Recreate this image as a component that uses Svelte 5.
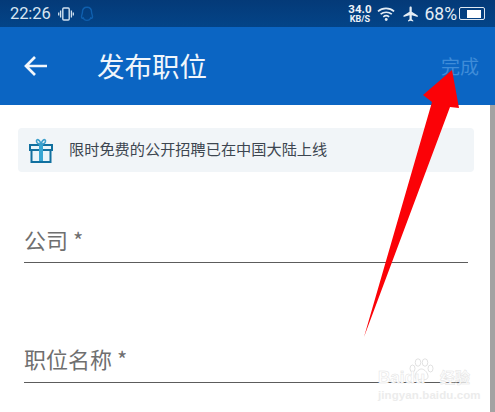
<script lang="ts">
  const fields = ["公司", "职位名称"];
</script>

<div class="screen">
  <header class="status-bar">
    <span class="time">22:26</span>
    <svg class="vibrate" width="16" height="14" viewBox="0 0 16 14" fill="none" stroke="#cfe0ef">
      <rect x="4.8" y="1" width="6.4" height="12" rx="1" stroke-width="1.4" />
      <path d="M2.6 3.5v7M13.4 3.5v7M.7 5.5v3M15.3 5.5v3" stroke-width="1.3" />
    </svg>
    <svg class="qq" width="14" height="16" viewBox="0 0 14 16" fill="none" stroke="#0f5fae" stroke-width="1.4">
      <path d="M7 1.2c3 0 4.6 2.3 4.6 5.2 0 1.400.9 2.800.9 4.600 0 1.200-.8 1.600-1.700.9-.5 1.500-2 2.500-3.800 2.500s-3.300-1-3.800-2.500c-.9.700-1.700.3-1.700-.9 0-1.800.9-3.200.9-4.600C2.400 3.500 4 1.200 7 1.200z" />
    </svg>
    <span class="spacer"></span>
    <span class="speed"><b>34.0</b><b class="unit">KB/S</b></span>
    <svg class="wifi" width="19" height="16" viewBox="0 0 20 16" fill="none" stroke="#e4edf5" stroke-width="1.7">
      <path d="M1 5.200C5.800 1 13.200 1 18 5.200M3.800 8.200c3.400-2.800 8.400-2.800 11.800 0M6.600 11c1.900-1.500 4.300-1.500 6.200 0" />
      <circle cx="9.700" cy="13.800" r="1.500" fill="#e4edf5" stroke="none" />
    </svg>
    <svg class="plane" width="18" height="18" viewBox="0 0 24 24" fill="#e4edf5">
      <path d="M21 16v-2l-8-5V3.500C13 2.670 12.330 2 11.500 2S10 2.670 10 3.500V9l-8 5v2l8-2.500V19l-2 1.500V22l3.500-1 3.500 1v-1.500L13 19v-5.500l8 2.500z" />
    </svg>
    <span class="percent">68%</span>
    <span class="battery"><span class="battery-fill"></span></span>
  </header>

  <div class="app-bar">
    <svg class="back" width="26" height="24" viewBox="0 0 26 24" fill="none" stroke="#f2f7fc" stroke-width="2.700">
      <path d="M24 12H3M12 3l-9 9 9 9" />
    </svg>
    <h1 class="title">发布职位</h1>
    <span class="done">完成</span>
  </div>

  <main class="content">
    <div class="notice">
      <svg class="gift" width="24" height="26" viewBox="0 0 24 26" fill="none" stroke="#11709f" stroke-width="2">
        <rect x="1" y="8" width="22" height="5" fill="#e9f5fa" />
        <rect x="2.500" y="13" width="19" height="12" fill="#e9f5fa" />
        <path d="M10 8h4v16h-4z" fill="#36a6d3" stroke="none" />
        <path d="M12 7.500C9.500 7 7.500 6 7.500 4 7.500 2 10.500 1.500 12 7.500c1.500-6 4.500-5.500 4.500-3.500S14.500 7 12 7.500z" stroke="#3c9fcb" stroke-width="1.600" />
      </svg>
      <span class="notice-text">限时免费的公开招聘已在中国大陆上线</span>
    </div>

    {#each fields as field}
      <div class="field">
        <span class="field-label">{field} *</span>
      </div>
    {/each}
  </main>

  <svg class="arrow" width="110" height="275" viewBox="0 0 110 275">
    <path d="M92 0 L63 25 L72 32 L4 267 L90 37 L99 38 Z" fill="#fb0207" />
  </svg>

  <div class="watermark">
    <svg class="paw" width="29" height="23" viewBox="0 0 54 46" fill="#fff" stroke="#e2e2e2" stroke-width="2">
      <ellipse cx="9" cy="21" rx="5" ry="7" />
      <ellipse cx="20" cy="9" rx="5.500" ry="7.500" />
      <ellipse cx="34" cy="9" rx="5.500" ry="7.500" />
      <ellipse cx="45" cy="21" rx="5" ry="7" />
      <path d="M27 22c-6 0-13 8-13 15 0 7 8 7 13 5 5 2 13 2 13-5 0-7-7-15-13-15z" />
    </svg>
    <div class="wm-name"><span>Baidu</span><span class="wm-cn">经验</span></div>
    <span class="wm-url">jingyan.baidu.com</span>
  </div>
</div>

<style>
  :global(body) {
    margin: 0;
    background: #fff;
  }

  .screen {
    position: relative;
    display: flex;
    flex-direction: column;
    width: 495px;
    height: 412px;
    overflow: hidden;
    font-family: "Noto Sans CJK SC", "Noto Sans", sans-serif;
  }

  .status-bar {
    display: flex;
    align-items: center;
    flex: none;
    height: 27px;
    padding: 0 10px 0 10px;
    box-sizing: border-box;
    background: linear-gradient(#043a78, #034488);
    color: #e4edf5;
  }

  .time {
    font: 16.500px Roboto, sans-serif;
    letter-spacing: -0.1px;
    color: #d8e6f2;
  }

  .vibrate {
    margin-left: 7px;
  }

  .qq {
    margin-left: 6px;
  }

  .spacer {
    flex: 1;
  }

  .speed {
    display: flex;
    flex-direction: column;
    align-items: center;
    font-family: Roboto, sans-serif;
    line-height: 10px;
    font-size: 11.500px;
    color: #eef3f8;
  }

  .speed .unit {
    font-size: 9px;
  }

  .wifi {
    margin-left: 5px;
  }

  .plane {
    margin-left: 6px;
  }

  .percent {
    margin-left: 5px;
    font: 17.500px Roboto, sans-serif;
    color: #e4edf5;
  }

  .battery {
    display: flex;
    align-items: center;
    justify-content: flex-end;
    width: 26px;
    height: 13px;
    margin-left: 2px;
    padding: 1.500px 3px 1.500px 1px;
    box-sizing: border-box;
    border: 1.500px solid #dfe8f1;
    border-radius: 2px;
  }

  .battery-fill {
    width: 14px;
    height: 100%;
    background: #fff;
  }

  .app-bar {
    display: flex;
    align-items: center;
    flex: none;
    height: 78px;
    padding: 0 16px 0 23px;
    box-sizing: border-box;
    background: #0b65c3;
  }

  .back {
    flex: none;
  }

  .title {
    margin: 0 0 3px 48px;
    font-size: 27.500px;
    font-weight: 400;
    color: #f1f6fb;
  }

  .done {
    margin-left: auto;
    margin-bottom: 2px;
    font-size: 19px;
    color: #3f8cd8;
  }

  .content {
    flex: 1;
    padding: 23px 16px 0 18px;
    border-right: 5px solid #a3a3a3;
    background: #fff;
  }

  .notice {
    display: flex;
    align-items: center;
    height: 44px;
    padding-left: 11px;
    border-radius: 4px;
    background: #f1f5f8;
  }

  .notice-text {
    margin-left: 16px;
    margin-bottom: 5px;
    font-size: 15.200px;
    color: #3d4650;
  }

  .field {
    display: flex;
    align-items: flex-end;
    height: 91px;
    margin: 0 6px;
    border-bottom: 1.500px solid #5c5c5c;
    padding-bottom: 8.500px;
    box-sizing: border-box;
  }

  .field + .field {
    height: 119.500px;
  }

  .field-label {
    font-size: 22px;
    line-height: 30px;
    color: #6f6f6f;
  }

  .arrow {
    position: absolute;
    left: 360px;
    top: 70px;
  }

  .watermark {
    position: absolute;
    left: 378px;
    top: 358px;
    display: flex;
    flex-direction: column;
    width: 92px;
    padding-top: 11px;
    white-space: nowrap;
  }

  .paw {
    position: absolute;
    left: 29px;
    top: 0;
  }

  .wm-name {
    position: relative;
    display: flex;
    justify-content: space-between;
    font: 700 17px/17px "Liberation Sans", "Noto Sans CJK SC", sans-serif;
    color: #fff;
    -webkit-text-stroke: 0.500px #e3e3e3;
  }

  .wm-cn {
    font-size: 15px;
  }

  .wm-url {
    margin-top: 3px;
    font: 700 11.500px/12px "Liberation Sans", sans-serif;
    letter-spacing: 0.100px;
    color: #ececec;
  }
</style>
